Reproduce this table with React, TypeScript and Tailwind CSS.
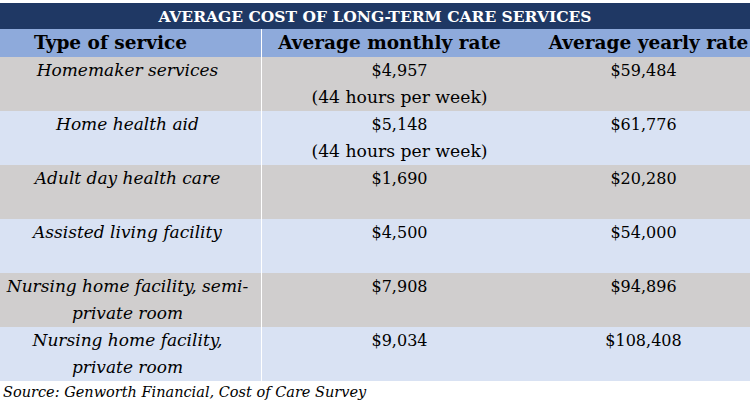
const rows = [
  { name: ['Homemaker services'], monthly: ['$4,957', '(44 hours per week)'], yearly: '$59,484' },
  { name: ['Home health aid'], monthly: ['$5,148', '(44 hours per week)'], yearly: '$61,776' },
  { name: ['Adult day health care'], monthly: ['$1,690'], yearly: '$20,280' },
  { name: ['Assisted living facility'], monthly: ['$4,500'], yearly: '$54,000' },
  { name: ['Nursing home facility, semi-', 'private room'], monthly: ['$7,908'], yearly: '$94,896' },
  { name: ['Nursing home facility,', 'private room'], monthly: ['$9,034'], yearly: '$108,408' },
]

const font = { fontFamily: '"DejaVu Serif", "Liberation Serif", serif' }

export default function App() {
  return (
    <div className="w-[751px] h-[403px] bg-white text-black text-[16px] leading-[27px]" style={font}>
      <div className="pt-[3px] w-[750px]">
        <div className="h-[26px] bg-[#1f3864] text-white font-bold text-center text-[15.5px] leading-[27px]">
          AVERAGE COST OF LONG-TERM CARE SERVICES
        </div>
        <div className="flex h-[28px] bg-[#8eaadb] font-bold text-[18.5px] leading-[28px] whitespace-nowrap">
          <div className="w-[262px] pr-[40px] text-center border-r border-white">Type of service</div>
          <div className="w-[255px] text-center">Average monthly rate</div>
          <div className="flex-1 pl-[30px] text-center">Average yearly rate</div>
        </div>
        {rows.map((r, i) => (
          <div key={i} className={`flex h-[54px] ${i % 2 === 0 ? 'bg-[#d0cece]' : 'bg-[#d9e2f3]'}`}>
            <div className="w-[262px] pr-[6px] text-center italic text-[17px] border-r border-white">
              {r.name.map((n) => (
                <div key={n}>{n}</div>
              ))}
            </div>
            <div className="w-[275px] text-center">
              {r.monthly.map((m, j) => (
                <div key={m} className={j === 1 ? 'text-[17.2px]' : ''}>{m}</div>
              ))}
            </div>
            <div className="flex-1 text-center">{r.yearly}</div>
          </div>
        ))}
        <div className="italic pl-[3px] text-[14.5px] leading-[22px]">Source: Genworth Financial, Cost of Care Survey</div>
      </div>
    </div>
  )
}
